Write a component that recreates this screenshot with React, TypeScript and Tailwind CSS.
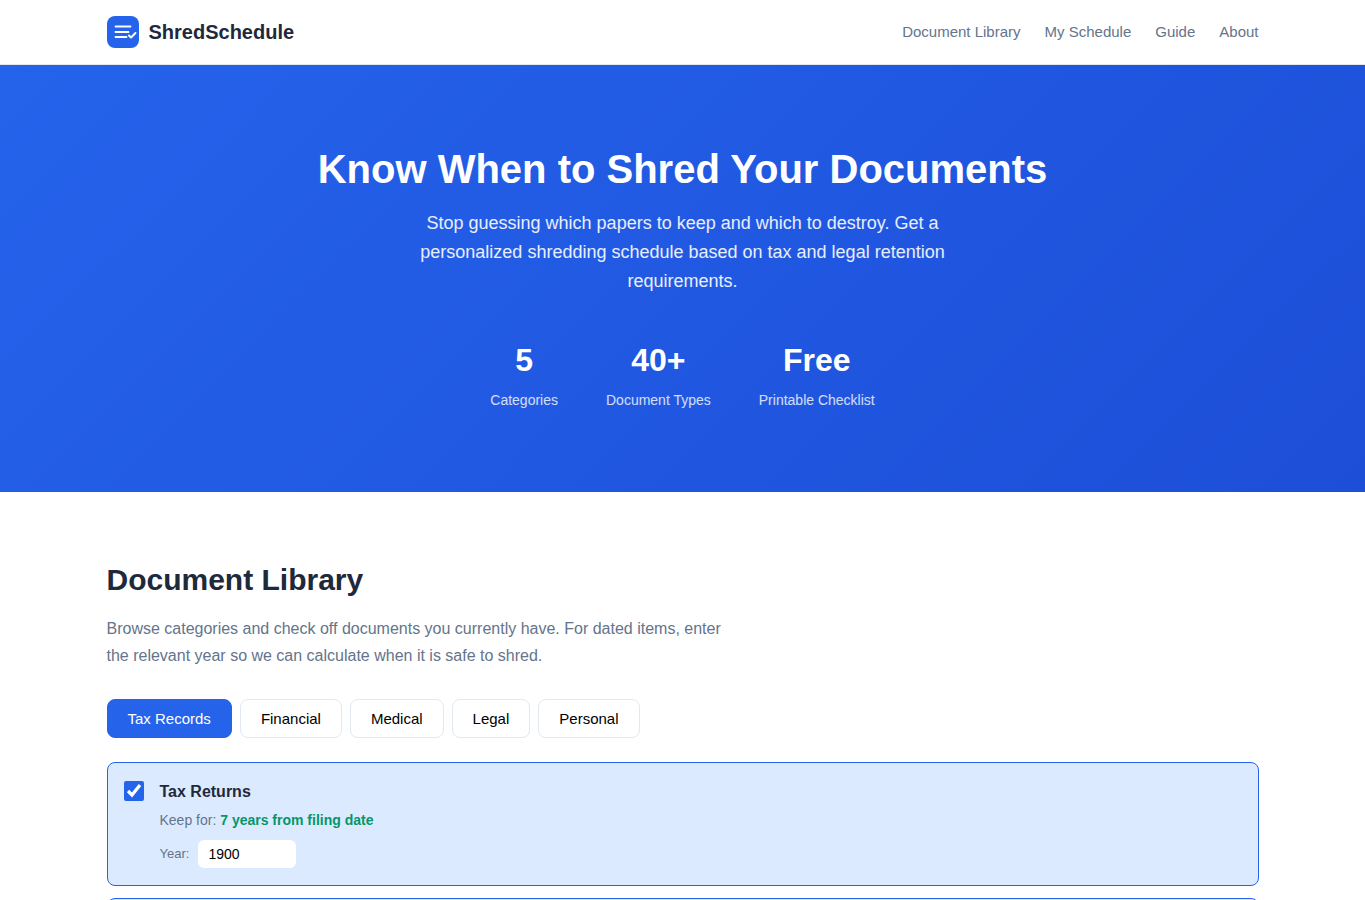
import { useState } from 'react';

const navLinks = ['Document Library', 'My Schedule', 'Guide', 'About'];
const tabs = ['Tax Records', 'Financial', 'Medical', 'Legal', 'Personal'];
const stats = [
  { value: '5', label: 'Categories' },
  { value: '40+', label: 'Document Types' },
  { value: 'Free', label: 'Printable Checklist' },
];

function Logo() {
  return (
    <div className="flex h-8 w-8 items-center justify-center rounded-lg bg-[#2563eb]">
      <svg width="32" height="32" viewBox="0 0 32 32" fill="none" stroke="white" strokeWidth="1.8" strokeLinecap="round" strokeLinejoin="round">
        <path d="M8.5 10.5h15" />
        <path d="M8.5 16h13" />
        <path d="M8.5 21h11" />
        <path d="M22 19.5l2 2 4.5-4.5" strokeWidth="2" />
      </svg>
    </div>
  );
}

function DocCard({ title, keep, year }: { title: string; keep: string; year: string }) {
  const [checked, setChecked] = useState(true);
  return (
    <div className="flex gap-4 rounded-lg border border-[#2563eb] bg-[#dbeafe] px-4 pb-[17px] pt-4">
      <input
        type="checkbox"
        checked={checked}
        onChange={() => setChecked(!checked)}
        className="mt-0.5 h-5 w-5 shrink-0 accent-[#2563eb]"
      />
      <div>
        <div className="text-base font-semibold leading-[25px] text-[#1e293b]">{title}</div>
        <div className="mt-[5px] text-sm leading-[22px] text-[#64748b]">
          Keep for: <span className="font-semibold text-[#059669]">{keep}</span>
        </div>
        <div className="mt-[9px] flex items-center gap-2">
          <span className="text-[13px] text-[#64748b]">Year:</span>
          <input
            defaultValue={year}
            className="ml-px h-7 w-[98px] rounded-md bg-white px-2.5 text-sm text-black outline-none"
          />
        </div>
      </div>
    </div>
  );
}

export default function App() {
  const [active, setActive] = useState('Tax Records');

  return (
    <div className="h-[900px] overflow-hidden bg-white font-['Liberation_Sans',Arial,sans-serif]">
      <header className="border-b border-[#e2e8f0] bg-white">
        <div className="mx-auto flex h-16 max-w-[1200px] items-center justify-between px-6">
          <div className="flex items-center gap-2.5">
            <Logo />
            <span className="text-xl font-bold text-[#1e293b]">ShredSchedule</span>
          </div>
          <nav className="flex gap-6">
            {navLinks.map((link) => (
              <a key={link} href="#" className="text-[15px] text-[#64748b]">
                {link}
              </a>
            ))}
          </nav>
        </div>
      </header>

      <section className="bg-[linear-gradient(135deg,#2563eb_0%,#1d4ed8_100%)] px-6 pb-[81px] pt-[80px] text-center text-white">
        <h1 className="text-[40px] font-bold leading-[48px]">Know When to Shred Your Documents</h1>
        <p className="mx-auto mt-4 max-w-[600px] text-lg leading-[29px] text-white/90">
          Stop guessing which papers to keep and which to destroy. Get a personalized shredding schedule based on tax and legal retention requirements.
        </p>
        <div className="mt-[39px] flex justify-center gap-12">
          {stats.map((s) => (
            <div key={s.label}>
              <div className="text-[32px] font-bold leading-[51px]">{s.value}</div>
              <div className="mt-[3px] text-sm leading-[22px] text-white/80">{s.label}</div>
            </div>
          ))}
        </div>
      </section>

      <main className="mx-auto max-w-[1200px] px-6 pt-[64px]">
        <h2 className="text-[30px] font-bold leading-[48px] text-[#1e293b]">Document Library</h2>
        <p className="mt-[11px] max-w-[640px] text-base leading-[27px] text-[#64748b]">
          Browse categories and check off documents you currently have. For dated items, enter the relevant year so we can calculate when it is safe to shred.
        </p>
        <div className="mt-[30px] flex gap-2">
          {tabs.map((tab) => (
            <button
              key={tab}
              onClick={() => setActive(tab)}
              className={
                active === tab
                  ? 'h-[39px] rounded-lg border border-[#2563eb] bg-[#2563eb] px-5 pt-px text-[15px] text-white'
                  : 'h-[39px] rounded-lg border border-[#e2e8f0] bg-white px-5 pt-px text-[15px] text-black'
              }
            >
              {tab}
            </button>
          ))}
        </div>
        <div className="mt-6 flex flex-col gap-3">
          <DocCard title="Tax Returns" keep="7 years from filing date" year="1900" />
          {/* next card is only peeking in at the bottom of the window */}
          <div className="h-[124px] rounded-lg border border-[#2563eb] bg-[#dbeafe]" />
        </div>
      </main>
    </div>
  );
}
